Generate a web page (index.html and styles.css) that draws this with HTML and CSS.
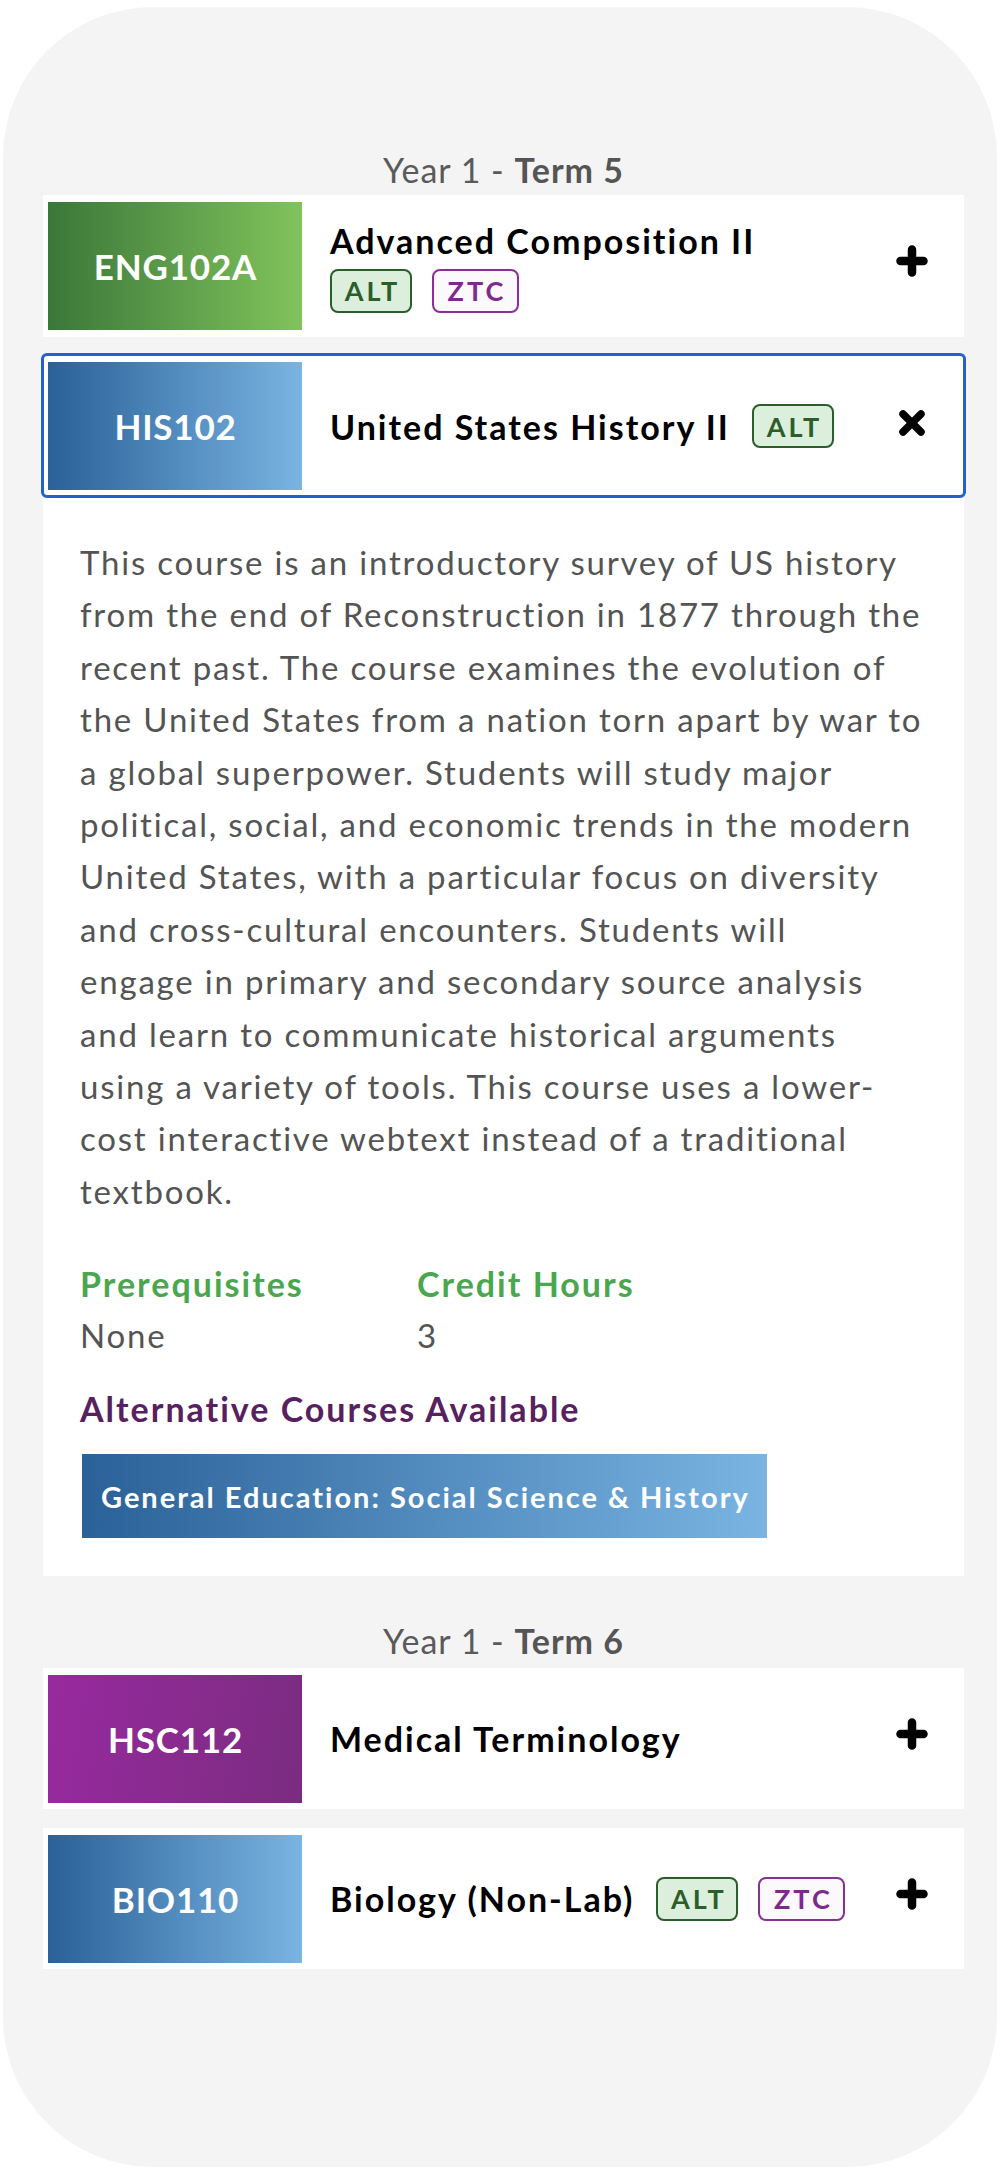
FILE: index.html
```html
<!DOCTYPE html>
<html lang="en">
<head>
<meta charset="utf-8">
<title>Course Plan</title>
<link rel="stylesheet" href="styles.css">
</head>
<body>
<div class="phone">
  <section class="term">
    <h2 class="term-title">Year 1 - <b>Term 5</b></h2>
    <div class="course">
      <div class="card">
        <div class="code code-green">ENG102A</div>
        <div class="info info-stack">
          <div class="title">Advanced Composition II</div>
          <div class="tags">
            <span class="tag tag-alt">ALT</span>
            <span class="tag tag-ztc">ZTC</span>
          </div>
        </div>
        <div class="icon">
          <svg width="32" height="32" viewBox="0 0 32 32"><path d="M16 4.5V27.5M4.5 16H27.5" stroke="#000" stroke-width="8.5" stroke-linecap="round" fill="none"/></svg>
        </div>
      </div>
    </div>
    <div class="course open">
      <div class="card selected">
        <div class="code code-blue">HIS102</div>
        <div class="info info-row">
          <div class="title">United States History II</div>
          <span class="tag tag-alt">ALT</span>
        </div>
        <div class="icon icon-close">
          <svg width="28" height="28" viewBox="0 0 28 28"><path d="M5 5L23 23M23 5L5 23" stroke="#000" stroke-width="7.5" stroke-linecap="round" fill="none"/></svg>
        </div>
      </div>
      <div class="details">
        <p class="desc">This course is an introductory survey of US history<br>from the end of Reconstruction in 1877 through the<br>recent past. The course examines the evolution of<br>the United States from a nation torn apart by war to<br>a global superpower. Students will study major<br>political, social, and economic trends in the modern<br>United States, with a particular focus on diversity<br>and cross-cultural encounters. Students will<br>engage in primary and secondary source analysis<br>and learn to communicate historical arguments<br>using a variety of tools. This course uses a lower-<br>cost interactive webtext instead of a traditional<br>textbook.</p>
        <div class="facts">
          <div class="fact">
            <h3 class="fact-label">Prerequisites</h3>
            <div class="fact-value">None</div>
          </div>
          <div class="fact">
            <h3 class="fact-label">Credit Hours</h3>
            <div class="fact-value">3</div>
          </div>
        </div>
        <h3 class="alt-title">Alternative Courses Available</h3>
        <a class="alt-button">General Education: Social Science &amp; History</a>
      </div>
    </div>
  </section>

  <section class="term term-next">
    <h2 class="term-title">Year 1 - <b>Term 6</b></h2>
    <div class="course">
      <div class="card">
        <div class="code code-purple">HSC112</div>
        <div class="info info-row">
          <div class="title">Medical Terminology</div>
        </div>
        <div class="icon">
          <svg width="32" height="32" viewBox="0 0 32 32"><path d="M16 4.5V27.5M4.5 16H27.5" stroke="#000" stroke-width="8.5" stroke-linecap="round" fill="none"/></svg>
        </div>
      </div>
    </div>
    <div class="course">
      <div class="card">
        <div class="code code-blue">BIO110</div>
        <div class="info info-row">
          <div class="title">Biology (Non-Lab)</div>
          <span class="tag tag-alt">ALT</span>
          <span class="tag tag-ztc">ZTC</span>
        </div>
        <div class="icon">
          <svg width="32" height="32" viewBox="0 0 32 32"><path d="M16 4.5V27.5M4.5 16H27.5" stroke="#000" stroke-width="8.5" stroke-linecap="round" fill="none"/></svg>
        </div>
      </div>
    </div>
  </section>
</div>
</body>
</html>
```

FILE: styles.css
```css
* { box-sizing: border-box; }

html, body {
  margin: 0;
  padding: 0;
  background: #ffffff;
}

body {
  font-family: Lato, "Noto Sans", "Liberation Sans", sans-serif;
}

.phone {
  width: 994px;
  height: 2160px;
  margin: 7px 3px;
  padding: 142px 33px 0 40px;
  background: #f4f4f4;
  border-radius: 150px;
  overflow: hidden;
}

.term-title {
  margin: 0 0 5px;
  text-align: center;
  font-size: 34px;
  line-height: 41px;
  font-weight: 400;
  letter-spacing: 1px;
  color: #5a5a5a;
}

.term-title b {
  font-weight: 700;
  color: #555555;
}

.term-next {
  margin-top: 44px;
}

.term-next .term-title {
  margin-bottom: 7px;
}

.course + .course {
  margin-top: 19px;
}

.card {
  display: flex;
  align-items: center;
  height: 142px;
  padding: 7px 36px 7px 5px;
  background: #ffffff;
}

.term-next .card {
  height: 141px;
}

.card.selected {
  height: 145px;
  margin: -3px -2px 0;
  padding: 3px 37px 2px 4px;
  border: 3px solid #2461c8;
  border-radius: 6px;
}

.code {
  flex: 0 0 254px;
  height: 128px;
  display: flex;
  align-items: center;
  justify-content: center;
  padding-left: 1px;
  color: #ffffff;
  font-weight: 700;
  font-size: 35px;
  letter-spacing: 0.8px;
}

.code-green {
  background: linear-gradient(to right, #3a773a, #81c35b);
}

.code-blue {
  background: linear-gradient(to right, #2a6198, #79b4e2);
}

.code-purple {
  background: linear-gradient(100deg, #982a9f, #7a2c80);
}

.info {
  flex: 1;
  margin-left: 28px;
}

.info-stack {
  display: flex;
  flex-direction: column;
  gap: 8px;
}

.info-row {
  display: flex;
  align-items: center;
  gap: 22px;
}

.info-row .tag + .tag {
  margin-left: -2px;
}

.title {
  font-size: 34px;
  line-height: 41px;
  font-weight: 700;
  letter-spacing: 2px;
  color: #000000;
}

.tags {
  display: flex;
  gap: 20px;
}

.tag {
  display: inline-flex;
  align-items: center;
  justify-content: center;
  height: 44px;
  padding: 0 0 0 3px;
  border: 2px solid;
  border-radius: 8px;
  font-size: 27px;
  font-weight: 700;
  letter-spacing: 3px;
}

.tag-alt {
  width: 82px;
  color: #2b5e2b;
  border-color: #2b5e2b;
  background: #dcefdc;
}

.tag-ztc {
  width: 87px;
  color: #7e2a8c;
  border-color: #8a2f97;
  background: #fbf9fb;
}

.icon {
  flex: 0 0 auto;
  display: flex;
  margin-bottom: 10px;
}

.icon-close {
  margin-bottom: 7px;
}

.details {
  background: #ffffff;
  padding: 38px 20px 38px 37px;
}

.desc {
  margin: 0;
  font-size: 33px;
  line-height: 52.4px;
  letter-spacing: 1.8px;
  color: #545454;
}

.facts {
  display: grid;
  grid-template-columns: 337px auto;
  margin-top: 46px;
}

.fact-label {
  margin: 0 0 11px;
  font-size: 34px;
  line-height: 41px;
  font-weight: 700;
  letter-spacing: 2px;
  color: #4ba74f;
}

.fact-value {
  font-size: 33px;
  line-height: 41px;
  letter-spacing: 1.8px;
  color: #545454;
}

.alt-title {
  margin: 32px 0 25px;
  font-size: 34px;
  line-height: 41px;
  font-weight: 700;
  letter-spacing: 2px;
  color: #57215f;
}

.alt-button {
  display: inline-flex;
  align-items: center;
  height: 84px;
  margin-left: 2px;
  padding: 0 17px 0 19px;
  background: linear-gradient(to right, #2a6198, #79b4e2);
  color: #ffffff;
  font-size: 29px;
  font-weight: 700;
  letter-spacing: 2px;
}
```
